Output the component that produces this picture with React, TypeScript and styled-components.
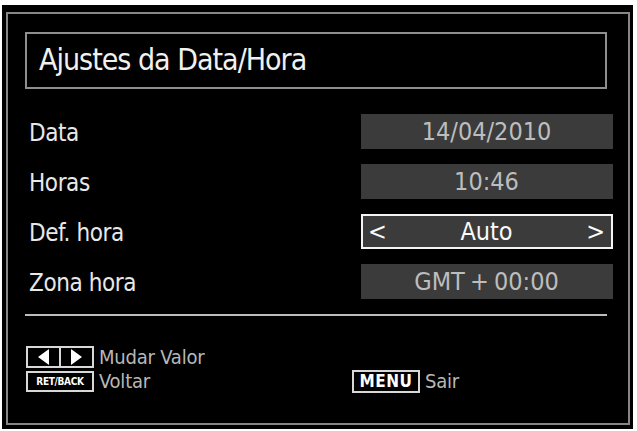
import React from "react";
import styled, { createGlobalStyle } from "styled-components";

const Global = createGlobalStyle`
  html, body { margin: 0; padding: 0; background: #fff; }
  body {
    font-family: "DejaVu Sans Condensed", "DejaVu Sans", sans-serif;
    font-stretch: condensed;
  }
`;

const Panel = styled.div`
  width: 631px;
  height: 424px;
  margin: 5px 0 0 2px;
  background: #000;
  padding: 7px 3px 4px 4px;
  box-sizing: border-box;
`;

const Frame = styled.div`
  height: 100%;
  box-sizing: border-box;
  border: 2px solid #868686;
  padding: 18px 21px 0 17px;
  display: flex;
  flex-direction: column;
`;

const TitleBox = styled.div`
  height: 57px;
  box-sizing: border-box;
  border: 2px solid #8e8e8e;
  padding: 0 0 2px 12px;
  display: flex;
  align-items: center;
  color: #f0f0f0;
  font-size: 30px;
  letter-spacing: -1px;
`;

const Rows = styled.div`
  margin: 25px -6px 0 0;
  display: flex;
  flex-direction: column;
  gap: 15px;
`;

const Row = styled.div`
  height: 35px;
  display: flex;
  align-items: center;
  justify-content: space-between;
`;

const Label = styled.span`
  color: #e8e8e8;
  font-size: 24px;
  letter-spacing: -0.4px;
  padding: 2px 0 0 4px;
`;

const Value = styled.div<{ $selected?: boolean }>`
  width: 252px;
  height: 100%;
  box-sizing: border-box;
  background: #3b3b3b;
  border: 2px solid ${(p) => (p.$selected ? "#f4f4f4" : "transparent")};
  display: flex;
  align-items: center;
  justify-content: ${(p) => (p.$selected ? "space-between" : "center")};
  padding: 0 6px 0 5px;
  color: ${(p) => (p.$selected ? "#fafafa" : "#bdbdbd")};
  font-size: 25px;
  word-spacing: -2px;
`;

const Divider = styled.div`
  margin-top: 15px;
  height: 2px;
  background: #bdbdbd;
`;

const Footer = styled.div`
  margin-top: 30px;
  display: grid;
  grid-template-columns: 326px 1fr;
  align-items: center;
  row-gap: 2px;
  padding-left: 1px;
`;

const Hint = styled.div`
  display: flex;
  align-items: center;
  gap: 5px;
  height: 22px;
  color: #b8b8b8;
  font-size: 20px;
  letter-spacing: -0.2px;
`;

const Key = styled.span<{ $size: number; $h: number }>`
  width: 68px;
  height: ${(p) => p.$h}px;
  box-sizing: border-box;
  border: 2px solid #d8d8d8;
  display: inline-flex;
  align-items: center;
  justify-content: center;
  color: #fff;
  font-size: ${(p) => p.$size}px;
  font-weight: bold;
  letter-spacing: ${(p) => (p.$size > 12 ? "0.5px" : "-0.3px")};
`;

const ArrowKeys = styled.span`
  width: 68px;
  height: 22px;
  box-sizing: border-box;
  border: 2px solid #d8d8d8;
  display: inline-flex;
`;

const ArrowHalf = styled.span<{ $left?: boolean }>`
  flex: 1;
  display: flex;
  align-items: center;
  justify-content: center;
  border-right: ${(p) => (p.$left ? "2px solid #d8d8d8" : "none")};
`;

const Tri = ({ dir }: { dir: "l" | "r" }) => (
  <svg width="13" height="16" viewBox="0 0 13 16">
    <polygon points={dir === "l" ? "12,0 12,16 1,8" : "1,0 1,16 12,8"} fill="#fff" />
  </svg>
);

const rows = [
  { label: "Data", value: "14/04/2010" },
  { label: "Horas", value: "10:46" },
  { label: "Def. hora", value: "Auto", selected: true },
  { label: "Zona hora", value: "GMT + 00:00" },
];

export default function App() {
  return (
    <>
      <Global />
      <Panel>
        <Frame>
          <TitleBox>Ajustes da Data/Hora</TitleBox>
          <Rows>
            {rows.map((r) => (
              <Row key={r.label}>
                <Label>{r.label}</Label>
                <Value $selected={r.selected}>
                  {r.selected ? (
                    <>
                      <span>&lt;</span>
                      <span>{r.value}</span>
                      <span>&gt;</span>
                    </>
                  ) : (
                    r.value
                  )}
                </Value>
              </Row>
            ))}
          </Rows>
          <Divider />
          <Footer>
            <Hint>
              <ArrowKeys>
                <ArrowHalf $left>
                  <Tri dir="l" />
                </ArrowHalf>
                <ArrowHalf>
                  <Tri dir="r" />
                </ArrowHalf>
              </ArrowKeys>
              Mudar Valor
            </Hint>
            <div />
            <Hint>
              <Key $size={10} $h={21}>RET/BACK</Key>
              Voltar
            </Hint>
            <Hint>
              <Key $size={17} $h={23}>MENU</Key>
              Sair
            </Hint>
          </Footer>
        </Frame>
      </Panel>
    </>
  );
}
